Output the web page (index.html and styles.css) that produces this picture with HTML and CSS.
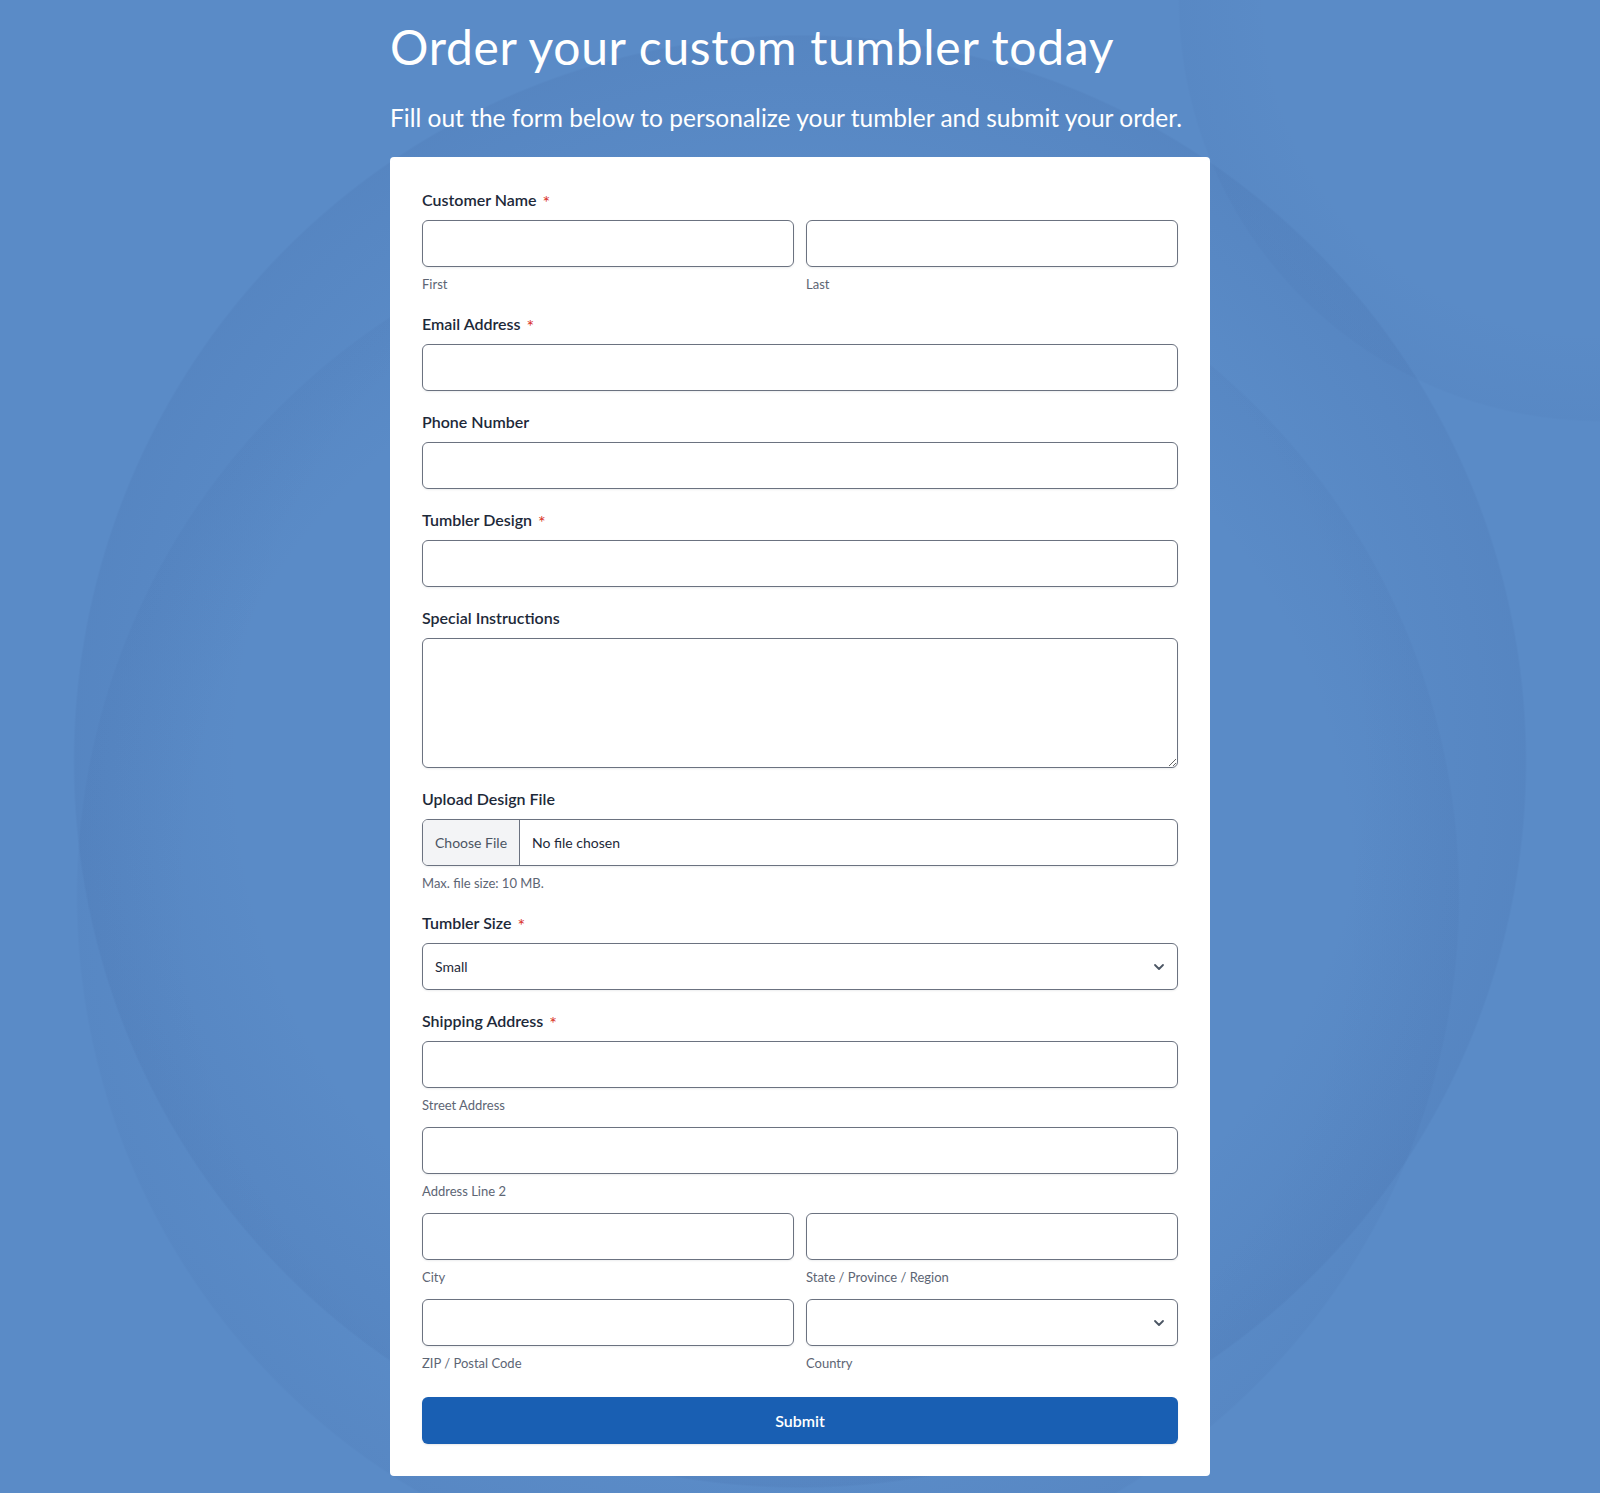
FILE: index.html
```html
<!DOCTYPE html>
<html lang="en">
<head>
<meta charset="utf-8">
<title>Order your custom tumbler today</title>
<link rel="stylesheet" href="styles.css">
</head>
<body>
<main class="page">
  <header class="intro">
    <h1 class="title">Order your custom tumbler today</h1>
    <p class="subtitle">Fill out the form below to personalize your tumbler and submit your order.</p>
  </header>
  <form class="card">
    <div class="field">
      <div class="label">Customer Name <span class="req">*</span></div>
      <div class="row2">
        <div class="sub">
          <input class="input" type="text">
          <div class="hint">First</div>
        </div>
        <div class="sub">
          <input class="input" type="text">
          <div class="hint">Last</div>
        </div>
      </div>
    </div>

    <div class="field">
      <div class="label">Email Address <span class="req">*</span></div>
      <input class="input" type="email">
    </div>

    <div class="field">
      <div class="label">Phone Number</div>
      <input class="input" type="tel">
    </div>

    <div class="field">
      <div class="label">Tumbler Design <span class="req">*</span></div>
      <input class="input" type="text">
    </div>

    <div class="field">
      <div class="label">Special Instructions</div>
      <textarea class="input textarea"></textarea>
    </div>

    <div class="field">
      <div class="label">Upload Design File</div>
      <div class="file">
        <span class="file-btn">Choose File</span>
        <span class="file-name">No file chosen</span>
      </div>
      <div class="hint">Max. file size: 10 MB.</div>
    </div>

    <div class="field">
      <div class="label">Tumbler Size <span class="req">*</span></div>
      <div class="select-wrap">
        <select class="input select">
          <option>Small</option>
          <option>Medium</option>
          <option>Large</option>
        </select>
        <svg class="chev" viewBox="0 0 12 8" width="12" height="8"><path d="M2 2l4 4 4-4" fill="none" stroke="#4b5563" stroke-width="1.8" stroke-linecap="round" stroke-linejoin="round"/></svg>
      </div>
    </div>

    <div class="field address">
      <div class="label">Shipping Address <span class="req">*</span></div>
      <div class="addr-row">
        <input class="input" type="text">
        <div class="hint">Street Address</div>
      </div>
      <div class="addr-row">
        <input class="input" type="text">
        <div class="hint">Address Line 2</div>
      </div>
      <div class="row2 addr-row">
        <div class="sub">
          <input class="input" type="text">
          <div class="hint">City</div>
        </div>
        <div class="sub">
          <input class="input" type="text">
          <div class="hint">State / Province / Region</div>
        </div>
      </div>
      <div class="row2 addr-row last">
        <div class="sub">
          <input class="input" type="text">
          <div class="hint">ZIP / Postal Code</div>
        </div>
        <div class="sub">
          <div class="select-wrap">
            <select class="input select"><option></option></select>
            <svg class="chev" viewBox="0 0 12 8" width="12" height="8"><path d="M2 2l4 4 4-4" fill="none" stroke="#4b5563" stroke-width="1.8" stroke-linecap="round" stroke-linejoin="round"/></svg>
          </div>
          <div class="hint">Country</div>
        </div>
      </div>
    </div>

    <button class="submit" type="button">Submit</button>
  </form>
</main>
</body>
</html>
```

FILE: styles.css
```css
* { box-sizing: border-box; }

html, body {
  margin: 0;
  padding: 0;
}

body {
  min-height: 1493px;
  font-family: Lato, "Open Sans", "Liberation Sans", sans-serif;
  color: #1d2939;
  background-color: #5a8bc7;
  background-image:
    radial-gradient(circle at 50% 51%, rgba(40, 70, 130, 0) 0, rgba(40, 70, 130, 0) 560px, rgba(40, 70, 130, 0.08) 725px, rgba(40, 70, 130, 0) 727px),
    radial-gradient(circle at 48% 60%, rgba(40, 70, 130, 0) 0, rgba(40, 70, 130, 0) 580px, rgba(40, 70, 130, 0.05) 690px, rgba(40, 70, 130, 0) 692px),
    radial-gradient(circle at 100% 0%, rgba(40, 70, 130, 0) 0, rgba(40, 70, 130, 0) 330px, rgba(40, 70, 130, 0.04) 420px, rgba(40, 70, 130, 0) 422px);
  background-repeat: no-repeat;
}

.page {
  width: 820px;
  margin: 0 auto;
  padding-top: 18px;
  padding-bottom: 17px;
}

.intro {
  color: #ffffff;
}

.title {
  margin: 0;
  font-size: 48px;
  line-height: 1.2;
  font-weight: 400;
  letter-spacing: 0.7px;
}

.subtitle {
  margin: 27px 0 0;
  font-size: 24.5px;
  line-height: 1.2;
  font-weight: 400;
}

.card {
  margin-top: 25px;
  background: #ffffff;
  border-radius: 4px;
  padding: 31px 32px 32px;
}

.field {
  margin-bottom: 19px;
}

.label {
  font-size: 16px;
  line-height: 24px;
  font-weight: 600;
  color: #1d2939;
  margin-bottom: 8px;
}

.req {
  color: #d93025;
  font-size: 18px;
  line-height: 1;
  font-weight: 400;
  margin-left: 2px;
  display: inline-block;
  transform: translateY(3px);
}

.row2 {
  display: grid;
  grid-template-columns: 1fr 1fr;
  gap: 12px;
}

.input {
  display: block;
  width: 100%;
  height: 47px;
  margin: 0;
  padding: 0 12px;
  border: 1px solid #6b7280;
  border-radius: 6px;
  background: #ffffff;
  font-family: inherit;
  font-size: 14px;
  color: #1d2939;
  box-shadow: 0 1px 2px rgba(16, 24, 40, 0.08);
  outline: none;
}

.textarea {
  height: 130px;
  padding: 10px 12px;
  resize: vertical;
}

.hint {
  margin-top: 8px;
  font-size: 13px;
  line-height: 18px;
  color: #5d6574;
}

.file {
  display: flex;
  align-items: stretch;
  height: 47px;
  border: 1px solid #6b7280;
  border-radius: 6px;
  overflow: hidden;
  box-shadow: 0 1px 2px rgba(16, 24, 40, 0.08);
  font-size: 14px;
}

.file-btn {
  display: flex;
  align-items: center;
  padding: 0 12px;
  background: #f3f4f6;
  color: #4b5563;
  border-right: 1px solid #6b7280;
}

.file-name {
  display: flex;
  align-items: center;
  padding: 0 12px;
  color: #1d2939;
}

.select-wrap {
  position: relative;
}

.select {
  appearance: none;
  -webkit-appearance: none;
  padding-right: 36px;
}

.chev {
  position: absolute;
  right: 13px;
  top: 20px;
  pointer-events: none;
}

.addr-row {
  margin-bottom: 13px;
}

.addr-row.last {
  margin-bottom: 0;
}

.address {
  margin-bottom: 25px;
}

.submit {
  display: block;
  width: 100%;
  height: 47px;
  border: none;
  border-radius: 6px;
  background: #195fb3;
  color: #ffffff;
  font-family: inherit;
  font-size: 16px;
  font-weight: 600;
  box-shadow: 0 1px 2px rgba(16, 24, 40, 0.1);
}
```
